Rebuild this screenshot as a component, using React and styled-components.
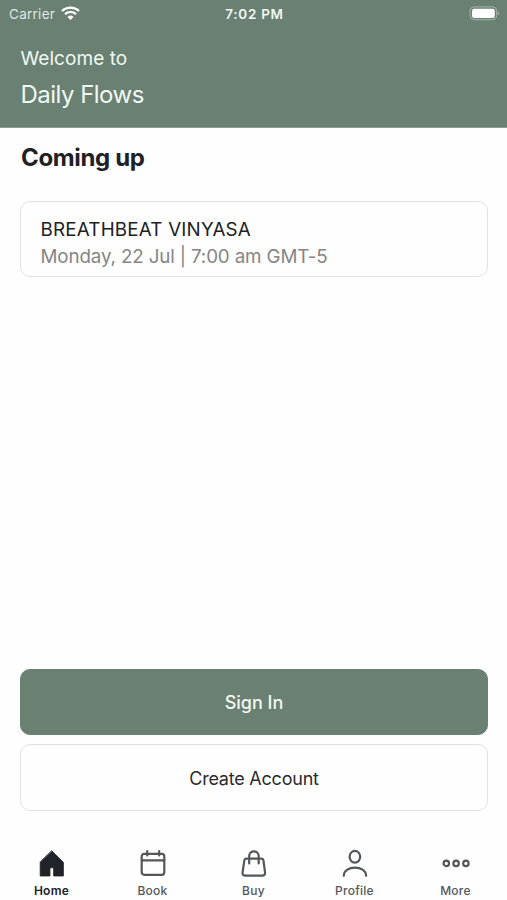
import React from "react";
import styled, { createGlobalStyle } from "styled-components";

const GlobalStyle = createGlobalStyle`
  * { box-sizing: border-box; }
  body { margin: 0; background: #fefefe; }
`;

const Screen = styled.div`
  display: flex;
  flex-direction: column;
  width: 507px;
  height: 900px;
  overflow: hidden;
  background: #fefefe;
  color: #202124;
  font-family: Inter, "Liberation Sans", sans-serif;
`;

const Header = styled.header`
  height: 128px;
  flex: none;
  background: #698072;
  border-bottom: 1px solid #8c9f93;
  color: #f1f8f2;
`;

const StatusBar = styled.div`
  display: grid;
  grid-template-columns: 1fr auto 1fr;
  align-items: center;
  height: 27px;
  padding: 0 7px 0 9px;
`;

const Carrier = styled.div`
  display: flex;
  align-items: center;
  gap: 6px;
`;

const StatusText = styled.span`
  font-size: 13.5px;
  line-height: 16px;
  font-weight: ${(p) => (p.$strong ? 600 : 400)};
  letter-spacing: ${(p) => p.$spacing || "0"};
  white-space: nowrap;
  color: ${(p) => (p.$strong ? "#f1f8f2" : "#dfe9e1")};
`;

const BatteryIcon = styled.svg`
  display: block;
  justify-self: end;
`;

const Line = styled.div`
  font-size: ${(p) => p.$size};
  line-height: ${(p) => p.$height};
  letter-spacing: ${(p) => p.$spacing || "0"};
  color: ${(p) => p.$color || "inherit"};
  white-space: nowrap;
`;

const Greeting = styled.div`
  padding: 18px 20.5px 0;
`;

const Content = styled.main`
  flex: 1;
  display: flex;
  flex-direction: column;
  padding: 14px 19px 0 20px;
`;

const SectionTitle = styled.h1`
  margin: 0 0 27px 1px;
  font-size: 24px;
  line-height: 32px;
  font-weight: 700;
  letter-spacing: -0.35px;
`;

const ClassCard = styled.section`
  height: 76px;
  padding: 14px 19.5px 0;
  border: 1px solid #e2e2e2;
  border-radius: 10px;
`;

const Actions = styled.div`
  display: flex;
  flex-direction: column;
  gap: 9px;
  margin-top: auto;
`;

const Button = styled.button`
  height: ${(p) => (p.$primary ? "66px" : "67px")};
  padding: 2px 0 0;
  border: 1px solid ${(p) => (p.$primary ? "#698072" : "#e2e2e2")};
  border-radius: 10px;
  background: ${(p) => (p.$primary ? "#698072" : "#fefefe")};
  color: ${(p) => (p.$primary ? "#f1f8f2" : "#2b2b2d")};
  font: ${(p) => (p.$primary ? 500 : 400)} 18px/24px Inter, "Liberation Sans", sans-serif;
  letter-spacing: ${(p) => p.$spacing || "0"};
`;

const TabBar = styled.nav`
  display: grid;
  grid-template-columns: repeat(5, 101px);
  justify-content: start;
  height: 89px;
  padding: 38px 0 0 1px;
  flex: none;
`;

const Tab = styled.div`
  display: flex;
  flex-direction: column;
  align-items: center;
  gap: 6px;
  color: ${(p) => (p.$active ? "#202329" : "#54575a")};
`;

const TabLabel = styled.span`
  font-size: 12px;
  line-height: 16px;
  font-weight: ${(p) => (p.$active ? 600 : 500)};
  letter-spacing: 0.25px;
`;

const TabIcon = styled.svg`
  display: block;
  fill: none;
  stroke: currentColor;
  stroke-width: 2.2;
  stroke-linecap: round;
  stroke-linejoin: round;
`;

const tabs = [
  {
    label: "Home",
    active: true,
    art: (
      <path
        d="M13.9 1.9 25.4 13.3V27H15.6V18.8H12V27H2.2V13.3Z"
        fill="currentColor"
        strokeWidth="0.8"
      />
    ),
  },
  {
    label: "Book",
    art: (
      <>
        <rect x="2.7" y="4.8" width="22.6" height="21" rx="2.5" />
        <path d="M2.8 11.3H25.3M8.2 2.2V6.4M20.2 2.2V6.4" />
      </>
    ),
  },
  {
    label: "Buy",
    art: (
      <>
        <path d="M6.2 9.6H21.6Q23.2 9.6 23.4 11.2L25 23.2Q25.4 26.6 22.2 26.6H5.4Q2.2 26.6 2.6 23.2L4.4 11.2Q4.6 9.6 6.2 9.6Z" />
        <path d="M9.2 14.4V7C9.2 .8 18.7 .8 18.7 7V14.4" />
      </>
    ),
  },
  {
    label: "Profile",
    art: (
      <>
        <ellipse cx="13.9" cy="7.8" rx="5.3" ry="5.9" />
        <path d="M2.8 26.8C2.8 15.9 25.1 15.9 25.1 26.8" />
      </>
    ),
  },
  {
    label: "More",
    art: (
      <>
        <circle cx="4.3" cy="14.4" r="2.7" />
        <circle cx="14.1" cy="14.4" r="2.7" />
        <circle cx="23.9" cy="14.4" r="2.7" />
      </>
    ),
  },
];

export default function App() {
  return (
    <Screen>
      <GlobalStyle />
      <Header>
        <StatusBar>
          <Carrier>
            <StatusText $spacing="0.27px">Carrier</StatusText>
            <svg width="19" height="15" viewBox="0 0 19 15" aria-hidden="true">
              <g fill="none" stroke="#fff" strokeWidth="2.3">
                <path d="M1 5C5.7 .5 13.3 .5 18 5" />
                <path d="M4 8.2C7.1 5.2 11.9 5.2 15 8.2" />
              </g>
              <path d="M6.5 10.9Q9.5 8.3 12.5 10.9L9.5 14Z" fill="#fff" />
            </svg>
          </Carrier>
          <StatusText $strong $spacing="0.7px">7:02 PM</StatusText>
          <BatteryIcon width="31" height="15" viewBox="0 0 31 15" aria-hidden="true">
            <rect x="1.1" y=".9" width="26.6" height="12.8" rx="4" fill="none" stroke="#a5b4aa" />
            <rect x="3" y="2.7" width="22.8" height="9.3" rx="2.2" fill="#fff" />
            <path d="M28.7 5.2Q31.3 7.4 28.7 9.6Z" fill="#a5b4aa" />
          </BatteryIcon>
        </StatusBar>
        <Greeting>
          <Line $size="19px" $height="28px" $spacing="0.05px">Welcome to</Line>
          <Line $size="24px" $height="44px" $spacing="-0.52px">Daily Flows</Line>
        </Greeting>
      </Header>
      <Content>
        <SectionTitle>Coming up</SectionTitle>
        <ClassCard>
          <Line $size="18.8px" $height="27px" $spacing="0.2px">BREATHBEAT VINYASA</Line>
          <Line $size="18.8px" $height="27px" $spacing="-0.14px" $color="#858585">
            Monday, 22 Jul | 7:00 am GMT-5
          </Line>
        </ClassCard>
        <Actions>
          <Button $primary>Sign In</Button>
          <Button $spacing="-0.22px">Create Account</Button>
        </Actions>
      </Content>
      <TabBar>
        {tabs.map(({ label, active, art }) => (
          <Tab key={label} $active={active}>
            <TabIcon width="28" height="28" viewBox="0 0 28 28" aria-hidden="true">
              {art}
            </TabIcon>
            <TabLabel $active={active}>{label}</TabLabel>
          </Tab>
        ))}
      </TabBar>
    </Screen>
  );
}
